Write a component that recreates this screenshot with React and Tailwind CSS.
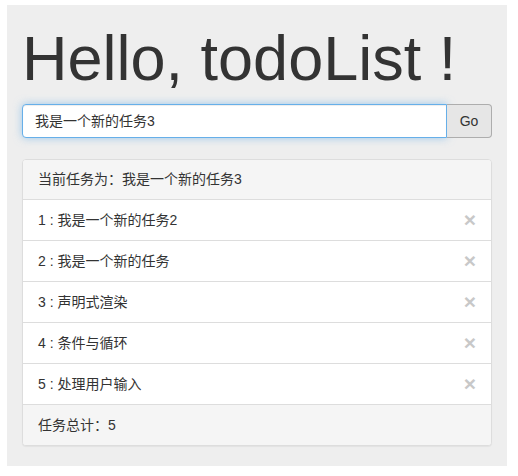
export default function App() {
  const items = ["我是一个新的任务2", "我是一个新的任务", "声明式渲染", "条件与循环", "处理用户输入"];
  return (
    <div className="min-h-[476px] bg-white pl-[7px] pt-[5px] text-[#333] text-[14px] font-['Liberation_Sans','Noto_Sans_CJK_SC',sans-serif]">
      <div className="w-[500px] bg-[#eeeeee] px-[15px] pt-[19px] pb-[20px]">
        <h1 className="text-[63px] leading-[1.1] font-normal mb-[11px] tracking-[0px]">Hello, todoList !</h1>
        <div className="flex h-[34px] mb-[21px]">
          <div className="flex-1 flex items-center bg-white border border-[#66afe9] rounded-l-[4px] px-[12px] shadow-[inset_0_1px_1px_rgba(0,0,0,0.075),0_0_8px_rgba(102,175,233,0.6)]">
            我是一个新的任务3
          </div>
          <div className="w-[45px] flex items-center justify-center bg-[#e6e6e6] border border-l-0 border-[#adadad] rounded-r-[4px]">
            Go
          </div>
        </div>
        <div className="bg-white border border-[#dddddd] rounded-[4px] shadow-[0_1px_1px_rgba(0,0,0,0.05)] overflow-hidden">
          <div className="bg-[#f5f5f5] px-[15px] py-[10px] leading-[19px] border-b border-[#dddddd]">当前任务为：我是一个新的任务3</div>
          {items.map((t, i) => (
            <div key={i} className="flex items-center justify-between px-[15px] py-[10px] leading-[20px] border-b border-[#dddddd]">
              <span>{i + 1} : {t}</span>
              <span className="text-[21px] font-bold leading-[20px] text-[#c8c8c8]">×</span>
            </div>
          ))}
          <div className="bg-[#f5f5f5] px-[15px] py-[10px] leading-[20px]">任务总计：5</div>
        </div>
      </div>
    </div>
  );
}
